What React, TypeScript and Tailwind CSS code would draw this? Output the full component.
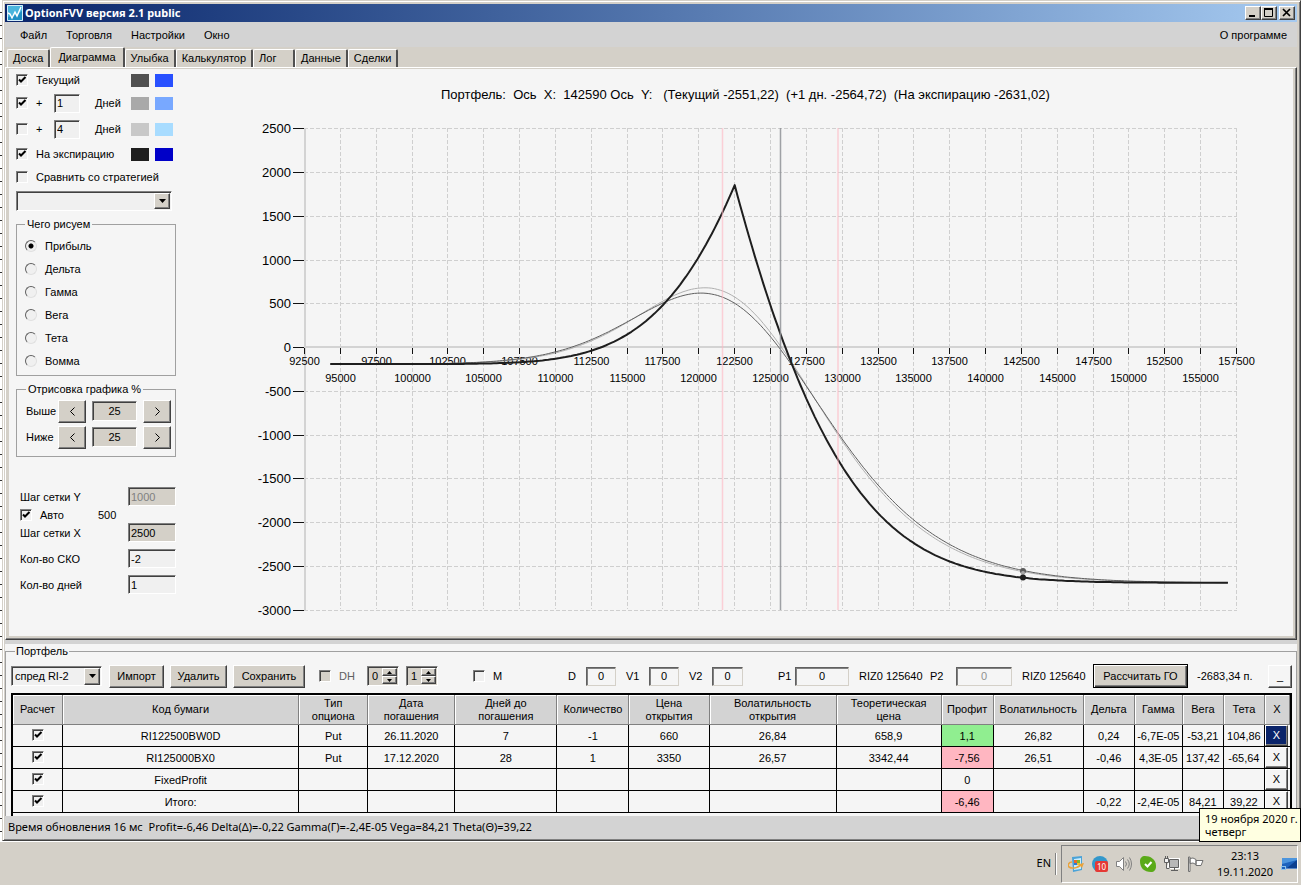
import { useState } from "react";
import type { ReactNode } from "react";

const SUNKEN =
  "border border-t-[#808080] border-l-[#808080] border-b-white border-r-white shadow-[inset_1px_1px_#404040]";
const RAISED =
  "border border-t-white border-l-white border-b-[#404040] border-r-[#404040] shadow-[inset_-1px_-1px_#808080]";
const TAHOMA = "font-['Noto_Sans',sans-serif]";

const TABS = ["Доска", "Диаграмма", "Улыбка", "Калькулятор", "Лог", "Данные", "Сделки"];
const GREEKS = ["Прибыль", "Дельта", "Гамма", "Вега", "Тета", "Вомма"];

const COLUMNS = [
  { title: "Расчет", width: "w-[50px]" },
  { title: "Код бумаги", width: "w-[236px]" },
  { title: "Тип\nопциона", width: "w-[69px]" },
  { title: "Дата\nпогашения", width: "w-[87px]" },
  { title: "Дней до\nпогашения", width: "w-[102px]" },
  { title: "Количество", width: "w-[72px]" },
  { title: "Цена\nоткрытия", width: "w-[80px]" },
  { title: "Волатильность\nоткрытия", width: "w-[127px]" },
  { title: "Теоретическая\nцена", width: "w-[105px]" },
  { title: "Профит", width: "w-[52px]" },
  { title: "Волатильность", width: "w-[90px]" },
  { title: "Дельта", width: "w-[51px]" },
  { title: "Гамма", width: "w-[48px]" },
  { title: "Вега", width: "w-[41px]" },
  { title: "Тета", width: "w-[41px]" },
  { title: "X", width: "w-[25px]" },
];

const ROWS = [
  ["RI122500BW0D", "Put", "26.11.2020", "7", "-1", "660", "26,84", "658,9", "1,1", "26,82", "0,24", "-6,7E-05", "-53,21", "104,86"],
  ["RI125000BX0", "Put", "17.12.2020", "28", "1", "3350", "26,57", "3342,44", "-7,56", "26,51", "-0,46", "4,3E-05", "137,42", "-65,64"],
  ["FixedProfit", "", "", "", "", "", "", "", "0", "", "", "", "", ""],
  ["Итого:", "", "", "", "", "", "", "", "-6,46", "", "-0,22", "-2,4E-05", "84,21", "39,22"],
];

const PROFIT_COL = 8;

// normal CDF, Abramowitz & Stegun 26.2.17
function cdf(x: number): number {
  if (x < 0) return 1 - cdf(-x);
  const t = 1 / (1 + 0.2316419 * x);
  const poly = t * (0.31938153 + t * (-0.356563782 + t * (1.781477937 + t * (-1.821255978 + t * 1.330274429))));
  return 1 - (Math.exp((-x * x) / 2) / Math.sqrt(2 * Math.PI)) * poly;
}

function putPrice(spot: number, strike: number, days: number, vol: number) {
  if (days === 0) return Math.max(strike - spot, 0);
  const s = vol * Math.sqrt(days / 365);
  const d1 = Math.log(spot / strike) / s + s / 2;
  return strike * cdf(s - d1) - spot * cdf(-d1);
}

// short RI122500BW0D at 660, long RI125000BX0 at 3350
function profit(spot: number, daysPassed: number) {
  return 660 - putPrice(spot, 122500, 7 - daysPassed, 0.2682) + putPrice(spot, 125000, 28 - daysPassed, 0.2651) - 3350;
}

const toX = (value: number) => 304.5 + ((value - 92500) / 65000) * 932;
const toY = (value: number) => 347.5 - value * 0.0875;
const snap = (px: number) => Math.floor(px) + 0.5;

function curve(daysPassed: number) {
  const points: string[] = [];
  for (let spot = 94300; spot <= 156900; spot += 200) {
    points.push(`${toX(spot).toFixed(1)} ${toY(profit(spot, daysPassed)).toFixed(1)}`);
  }
  return "M" + points.join("L");
}

function Chart() {
  const xs = Array.from({ length: 27 }, (_, i) => 92500 + i * 2500);
  const ys = Array.from({ length: 12 }, (_, i) => 2500 - i * 500);
  return (
    <svg viewBox="190 69 1103 567" className="min-w-0 flex-1 font-['Liberation_Sans',Arial,sans-serif]" role="img" aria-label="Диаграмма портфеля">
      <text x="441" y="99" fontSize="13">
        {"Портфель:\u00a0 Ось\u00a0 X:\u00a0 142590 Ось\u00a0 Y:\u00a0\u00a0 (Текущий -2551,22)\u00a0 (+1 дн. -2564,72)\u00a0 (На экспирацию -2631,02)"}
      </text>

      <g stroke="#cfcfcf" strokeDasharray="4 2">
        {xs.slice(1).map((v) => <path key={v} d={`M${snap(toX(v))} 128V609`} />)}
        {ys.map((v) => <path key={v} d={`M304 ${snap(toY(v))}H1237`} />)}
      </g>
      <path d="M305 128V610M304 347H1237" stroke="#d3d3d3" strokeWidth="2" />

      {xs.map((v, i) => (
        <g key={v}>
          <path d={`M${snap(toX(v))} 348v6`} stroke="#111" />
          <text x={snap(toX(v))} y={i % 2 ? 382 : 365} fontSize="11" textAnchor="middle">{v}</text>
        </g>
      ))}
      {ys.map((v) => (
        <g key={v}>
          <path d={`M293 ${snap(toY(v))}h11`} stroke="#111" />
          <text x="291" y={snap(toY(v)) + 4.5} fontSize="13" textAnchor="end">{v}</text>
        </g>
      ))}

      <g fill="none" strokeLinejoin="round">
        <path d={curve(1)} stroke="#b0b0b0" />
        <path d={curve(0)} stroke="#606060" />
        <path d={curve(7)} stroke="#1e1e1e" strokeWidth="2" />
      </g>
      <path d="M722.5 128V610M838 128V610" stroke="#ffb6c1" strokeOpacity="0.6" strokeWidth="1.5" />
      <path d="M780.5 128V610" stroke="#8f9296" strokeOpacity="0.85" strokeWidth="1.5" />
      <circle cx="1023" cy="571" r="3" fill="#5a5a5a" />
      <circle cx="1023" cy="573" r="2" fill="#a9a9a9" />
      <circle cx="1023" cy="577.5" r="3" fill="#1e1e1e" />
    </svg>
  );
}

function Check({ label, checked = false, disabled = false }: { label: string; checked?: boolean; disabled?: boolean }) {
  return (
    <span className="inline-grid size-3 shrink-0">
      <input
        type="checkbox"
        aria-label={label}
        defaultChecked={checked}
        disabled={disabled}
        className={`peer col-start-1 row-start-1 size-3 appearance-none bg-[#f0f0f0] disabled:bg-[#d4d0c8] ${SUNKEN}`}
      />
      <svg viewBox="0 0 12 12" className="pointer-events-none z-10 col-start-1 row-start-1 hidden size-3 peer-checked:block">
        <path d="M3 5.5 5 7.5 9.5 3" stroke="#000" strokeWidth="2" fill="none" />
      </svg>
    </span>
  );
}

function Swatch({ className }: { className: string }) {
  return <span className={`h-[13px] w-[18px] ${className}`} />;
}

function LineRow({ className, label, days, checked, children }: { className: string; label: string; days?: string; checked?: boolean; children: ReactNode }) {
  return (
    <div className={`flex items-center ${className}`}>
      <Check label={label} checked={checked} />
      {days ? (
        <>
          <span className="ml-2 w-[18px]">+</span>
          <input aria-label="Число дней" defaultValue={days} className={`h-[19px] w-[26px] bg-[#f0f0f0] pl-[2px] ${SUNKEN}`} />
          <span className="ml-[15px]">Дней</span>
        </>
      ) : (
        <span className="ml-2">{label}</span>
      )}
      <span className="mr-[3px] ml-auto flex gap-[6px]">{children}</span>
    </div>
  );
}

function Combo({ className, label, options }: { className: string; label: string; options: string[] }) {
  return (
    <div className={`grid shrink-0 bg-[#f0f0f0] p-px ${SUNKEN} ${className}`}>
      <select aria-label={label} className="col-start-1 row-start-1 w-full appearance-none bg-transparent pl-[2px]">
        {options.map((o) => <option key={o}>{o}</option>)}
      </select>
      <span className={`pointer-events-none col-start-1 row-start-1 grid w-4 place-items-center justify-self-end bg-[#d4d0c8] ${RAISED}`}>
        <svg width="7" height="4"><path d="M0 0h7L3.5 4z" /></svg>
      </span>
    </div>
  );
}

function Arrow({ d }: { d: string }) {
  return (
    <svg width="5" height="9" viewBox="0 0 5 9" fill="none" stroke="#000" className="mx-auto">
      <path d={d} />
    </svg>
  );
}

function Percent({ label }: { label: string }) {
  const [value, setValue] = useState(25);
  return (
    <div className="flex h-6 items-center">
      <span className="w-8">{label}</span>
      <button aria-label={`${label} меньше`} onClick={() => setValue(value - 5)} className={`h-[23px] w-7 bg-[#d4d0c8] ${RAISED}`}>
        <Arrow d="M4.500 .5l-4 4 4 4" />
      </button>
      <input aria-label={label} readOnly value={value} className={`mx-[6px] h-5 w-[45px] bg-[#d4d0c8] text-center ${SUNKEN}`} />
      <button aria-label={`${label} больше`} onClick={() => setValue(value + 5)} className={`h-[23px] w-7 bg-[#d4d0c8] ${RAISED}`}>
        <Arrow d="M.5 .5l4 4-4 4" />
      </button>
    </div>
  );
}

function GridField({ label, value, className, disabled }: { label: string; value: string; className: string; disabled?: boolean }) {
  return (
    <label className="flex h-[19px] items-center justify-between">
      {label}
      <input defaultValue={value} disabled={disabled} className={`h-[19px] w-12 pl-[2px] disabled:text-[#808080] ${SUNKEN} ${className}`} />
    </label>
  );
}

function Settings() {
  return (
    <aside className="w-[167px] shrink-0 pl-[7px] leading-3">
      <LineRow className="h-[22px]" label="Текущий" checked>
        <Swatch className="bg-[#505050]" />
        <Swatch className="bg-[#2850ff]" />
      </LineRow>
      <LineRow className="h-6" label="+1 день" days="1" checked>
        <Swatch className="bg-[#a9a9a9]" />
        <Swatch className="bg-[#78a8ff]" />
      </LineRow>
      <LineRow className="h-7" label="+4 дня" days="4">
        <Swatch className="bg-[#c8c8c8]" />
        <Swatch className="bg-[#a8dcff]" />
      </LineRow>
      <LineRow className="h-[22px]" label="На экспирацию" checked>
        <Swatch className="bg-[#1e1e1e]" />
        <Swatch className="bg-[#0000c8]" />
      </LineRow>
      <LineRow className="h-6" label="Сравнить со стратегией">{null}</LineRow>
      <Combo className="mt-[2px] h-5 w-[156px]" label="Стратегия" options={[""]} />

      <fieldset className="mt-[7px] border border-[#a0a0a0] px-2 pt-1 pb-[3px]">
        <legend className="px-[2px]">Чего рисуем</legend>
        {GREEKS.map((name, i) => (
          <label key={name} className="flex h-[23px] items-center">
            <input
              type="radio"
              name="greek"
              defaultChecked={i === 0}
              className="size-3 appearance-none rounded-full border border-t-[#606060] border-l-[#606060] border-r-[#e0e0e0] border-b-[#e0e0e0] bg-[#f0f0f0] checked:bg-[radial-gradient(#000_2px,#f0f0f0_3px)]"
            />
            <span className="ml-2">{name}</span>
          </label>
        ))}
      </fieldset>

      <fieldset className="mt-[7px] border border-[#a0a0a0] pt-1 pr-1 pb-[7px] pl-[9px]">
        <legend className="px-[2px]">Отрисовка графика %</legend>
        <div className="flex flex-col gap-[2px]">
          <Percent label="Выше" />
          <Percent label="Ниже" />
        </div>
      </fieldset>

      <div className="mt-[30px] pb-6 pl-1">
        <GridField label="Шаг сетки Y" value="1000" className="bg-[#d4d0c8]" disabled />
        <div className="flex h-[17px] items-center">
          <Check label="Авто" checked />
          <span className="ml-2 w-[58px]">Авто</span>
          <span>500</span>
        </div>
        <div className="flex flex-col gap-[7px]">
          <GridField label="Шаг сетки X" value="2500" className="bg-[#d4d0c8]" />
          <GridField label="Кол-во СКО" value="-2" className="bg-[#f0f0f0]" />
          <GridField label="Кол-во дней" value="1" className="bg-[#f0f0f0]" />
        </div>
      </div>
    </aside>
  );
}

function Spinner({ label, start }: { label: string; start: number }) {
  const [value, setValue] = useState(start);
  return (
    <span className={`flex h-5 w-8 bg-[#d4d0c8] p-px ${SUNKEN}`}>
      <input aria-label={label} readOnly value={value} className="w-[13px] bg-transparent pl-[3px]" />
      <span className="flex flex-1 flex-col">
        <button aria-label={`${label} больше`} onClick={() => setValue(value + 1)} className={`grid flex-1 place-items-center ${RAISED}`}>
          <svg width="5" height="3"><path d="M0 3h5L2.5 0z" /></svg>
        </button>
        <button aria-label={`${label} меньше`} onClick={() => setValue(value - 1)} className={`grid flex-1 place-items-center ${RAISED}`}>
          <svg width="5" height="3"><path d="M0 0h5L2.5 3z" /></svg>
        </button>
      </span>
    </span>
  );
}

function Num({ label, className, disabled }: { label: string; className: string; disabled?: boolean }) {
  return (
    <label className="flex items-center justify-between">
      {label}
      <input defaultValue="0" disabled={disabled} className={`h-[19px] border border-t-[#606060] border-l-[#606060] border-r-[#d4d0c8] border-b-[#d4d0c8] bg-[#f5f5f5] text-center shadow-[inset_1px_1px_#808080] disabled:text-[#909090] ${className}`} />
    </label>
  );
}

function Toolbar() {
  return (
    <div className="mt-[7px] flex h-6 items-center whitespace-nowrap">
      <Combo className="h-5 w-[91px]" label="Портфель" options={["спред RI-2"]} />
      <div className="ml-[7px] flex gap-[6px]">
        <button className={`h-[23px] w-[55px] bg-[#d4d0c8] ${RAISED}`}>Импорт</button>
        <button className={`h-[23px] w-[57px] bg-[#d4d0c8] ${RAISED}`}>Удалить</button>
        <button className={`h-[23px] w-[72px] bg-[#d4d0c8] ${RAISED}`}>Сохранить</button>
      </div>
      <div className="ml-[14px] flex w-12 items-center gap-2 text-[#606060]">
        <Check label="DH" disabled />DH
      </div>
      <div className="flex gap-[7px]">
        <Spinner label="DH от" start={0} />
        <Spinner label="DH до" start={1} />
      </div>
      <div className="ml-[35px] flex w-[95px] items-center gap-2"><Check label="M" />M</div>
      <div className="flex gap-[10px]">
        <div className="w-12"><Num label="D" className="w-[30px]" /></div>
        <div className="w-[53px]"><Num label="V1" className="w-[30px]" /></div>
        <div className="w-[54px]"><Num label="V2" className="w-[31px]" /></div>
      </div>
      <div className="ml-[35px] w-[71px]"><Num label="P1" className="w-[54px]" /></div>
      <span className="ml-[10px] w-[71px]">RIZ0 125640</span>
      <div className="w-[82px]"><Num label="P2" className="w-14" disabled /></div>
      <span className="ml-[10px] w-[71px]">RIZ0 125640</span>
      <button className="h-6 w-[95px] border border-black bg-[#d4d0c8] shadow-[inset_1px_1px_#fff,inset_-1px_-1px_#404040,inset_-2px_-2px_#808080]">Рассчитать ГО</button>
      <span className="ml-[9px]">-2683,34 п.</span>
      <button aria-label="Свернуть портфель" className={`ml-auto h-[23px] w-6 ${RAISED}`}>_</button>
    </div>
  );
}

function PortfolioTable() {
  return (
    <div className="mt-[5px] border-2 border-b-0 border-black pb-[3px]">
      <table className="w-full table-fixed border-separate border-spacing-0 text-center">
        <colgroup>
          {COLUMNS.map((c) => <col key={c.title} className={c.width} />)}
        </colgroup>
        <thead>
          <tr className="h-[30px] bg-[#d3d3d3]">
            {COLUMNS.map((c) => (
              <th key={c.title} className="border-r border-b border-[#808080] p-0 leading-[13px] font-normal whitespace-pre-line shadow-[inset_1px_1px_#fff]">{c.title}</th>
            ))}
          </tr>
        </thead>
        <tbody>
          {ROWS.map((row, r) => (
            <tr key={row[0]} className="h-[22px]">
              <td className="border-r border-b border-black p-0 leading-3"><Check label={row[0]} checked /></td>
              {row.map((cell, c) => {
                const tint = c !== PROFIT_COL || cell === "0" ? "" : cell.startsWith("-") ? "bg-[#ffb6c1]" : "bg-[#90ee90]";
                return <td key={c} className={`border-r border-b border-black p-0 leading-3 whitespace-nowrap ${tint}`}>{cell}</td>;
              })}
              <td className="border-b border-black p-0">
                <button className={`block h-[21px] w-[23px] ${RAISED} ${r === 0 ? "bg-[#0a246a] text-white" : "bg-[#f5f5f5]"}`}>X</button>
              </td>
            </tr>
          ))}
        </tbody>
      </table>
    </div>
  );
}

function TitleButton({ label, children }: { label: string; children: ReactNode }) {
  return (
    <button aria-label={label} className={`h-[14px] w-4 bg-[#d4d0c8] ${RAISED}`}>
      <svg viewBox="0 0 14 12" className="h-3 w-[14px]" fill="none" stroke="#000">{children}</svg>
    </button>
  );
}

function TitleBar() {
  return (
    <div className={`flex h-[18px] items-center bg-linear-to-r from-[#0a246a] to-[#a6caf0] pr-[2px] pl-[2px] text-white ${TAHOMA}`}>
      <svg width="16" height="16" viewBox="0 0 16 16">
        <rect width="16" height="16" fill="#1f8fc4" />
        <path d="M0 0h16v5L10 10 0 12z" fill="#49b5dd" />
        <path d="M1 8l2 1 2 4 3-6 2 4 4-9" fill="none" stroke="#fff" strokeWidth="1.4" />
        <path d="M.5.5h15v15H.5z" fill="none" stroke="#d5eefa" />
      </svg>
      <span className="ml-[2px] font-bold">OptionFVV версия 2.1 public</span>
      <div className="ml-auto flex">
        <TitleButton label="Свернуть"><path d="M3 9h6" strokeWidth="2" /></TitleButton>
        <TitleButton label="Развернуть"><path d="M2.5 2v7.5h8V2M2 2h9" /><path d="M2 2h9" strokeWidth="2" /></TitleButton>
        <span className="w-[2px]" />
        <TitleButton label="Закрыть"><path d="M3 2l7 7M10 2l-7 7" strokeWidth="1.7" /></TitleButton>
      </div>
    </div>
  );
}

function Tray() {
  return (
    <div className="flex shrink-0 items-center gap-2">
      <svg width="16" height="16" viewBox="0 0 16 16">
        <path d="M4 1l10-1v14l-9 2z" fill="#4ba3d8" />
        <path d="M6 3l7-1v11l-7 1z" fill="#c9ecfb" />
        <path d="M6 4h3v3H6z" fill="#e86a2c" /><path d="M9 4h3v3H9z" fill="#7cb82f" />
        <path d="M6 7h3v2H6z" fill="#2f78d0" /><path d="M9 7h3v2H9z" fill="#f2c12e" />
        <path d="M4 6C1 6-1 9 1 11c3 2 8 1 12-2" fill="none" stroke="#e9a33c" strokeWidth="1.6" />
        <path d="M11 8l5-1-2 5z" fill="#e9a33c" />
      </svg>
      <svg width="16" height="16" viewBox="0 0 16 16">
        <circle cx="8" cy="8" r="8" fill="#3498cb" />
        <rect x="3" y="5" width="13" height="11" rx="2" fill="#e53935" />
        <text x="9.5" y="14" fontSize="8" fill="#fff" textAnchor="middle">10</text>
      </svg>
      <svg width="16" height="16" viewBox="0 0 16 16" fill="none" stroke="#808080">
        <path d="M.5 5.5h3l4-4v13l-4-4h-3z" fill="#fff" />
        <path d="M9.5 5.5q2 2.500 0 5M11.500 3.500q3.500 4.500 0 9M13.500 1.500q4 6.500 0 13" />
      </svg>
      <svg width="16" height="16" viewBox="0 0 16 16">
        <path d="M5 0c5 0 11 3 11 10 0 4-2 6-5 6C4 16 0 12 0 5c0-3 2-5 5-5z" fill="#5aaa18" />
        <path d="M5 8l2.500 2.500L11.500 6" fill="none" stroke="#fff" strokeWidth="2" />
      </svg>
      <svg width="16" height="16" viewBox="0 0 16 16" fill="none" stroke="#606060">
        <path d="M5.500 3.500h9v8h-9z" fill="#b8b8b8" stroke="#fff" strokeWidth="3" />
        <path d="M5.500 3.500h9v8h-9z" fill="#b8b8b8" />
        <path d="M7 14.500h7M10.500 12v2" />
        <path d="M.5 2.500h4v4h-4zM1.500 0v2M3.500 0v2M2.500 7v5.500h3" fill="#f5f5f5" />
      </svg>
      <svg width="16" height="16" viewBox="0 0 16 16" fill="#fff" stroke="#707070">
        <path d="M.5 1h1.500v14.500H.5zM2 2.500q3-1.500 6 1v5q-3-2.500-6-1zM8 4.500h7l-2 5H8z" />
      </svg>
    </div>
  );
}

function Taskbar() {
  return (
    <footer className={`relative flex h-11 items-center justify-end border-t border-white bg-[#d4d0c8] pr-[3px] ${TAHOMA}`}>
      <span>EN</span>
      <span className="ml-1 h-[22px] w-[2px] border-r border-r-white bg-[#808080]" />
      <div className="ml-1 flex h-[38px] w-[237px] items-center border border-t-[#808080] border-l-[#808080] border-r-white border-b-white pl-[6px]">
        <Tray />
        <div className="ml-auto w-16 text-center leading-4">
          <div>23:13</div>
          <div>19.11.2020</div>
        </div>
        <svg className="ml-1 shrink-0" width="16" height="16" viewBox="0 0 16 16">
          <path d="M1 2h15v10H1z" fill="#1d62bd" />
          <path d="M16 4v8H6z" fill="#0c3f8f" />
          <path d="M1 2h15v2L1 8z" fill="#4d95dd" />
          <path d="M0 10h5v4H0z" fill="#8ec2ea" />
          <path d="M1 11h3v2H1z" fill="#1d62bd" />
          <path d="M5 12h11v1H5z" fill="#5b89c9" />
        </svg>
      </div>
      <div role="tooltip" className="absolute right-0 bottom-full z-10 w-[102px] border border-black bg-[#ffffe1] px-[5px] py-[3px] leading-[13px] whitespace-nowrap">
        19 ноября 2020 г.<br />четверг
      </div>
    </footer>
  );
}

export default function App() {
  const [tab, setTab] = useState("Диаграмма");
  return (
    <div className="flex min-h-screen flex-col bg-[#d4d0c8] font-['Liberation_Sans',Arial,sans-serif] text-[11px] text-black">
      <div className="flex flex-1">
        <div className="w-[2px] bg-[repeating-linear-gradient(#fff_0_12px,#333_12px_13px)]" />
        <div className="flex min-w-0 flex-1 flex-col border border-t-[#d4d0c8] border-r-[#404040] border-b-[#404040] border-l-[#d4d0c8] pt-[3px] pr-[3px] pb-px pl-[2px] shadow-[inset_1px_1px_#fff,inset_-1px_-1px_#808080]">
          <TitleBar />
          <nav className="flex h-[25px] items-center bg-[#d3d3d3] pt-px pr-[10px] pl-[15px]">
            <button className="mr-[19px]">Файл</button>
            <button className="mr-[19px]">Торговля</button>
            <button className="mr-[19px]">Настройки</button>
            <button>Окно</button>
            <button className="ml-auto">О программе</button>
          </nav>
          <div role="tablist" className="flex items-end pl-[2px]">
            {TABS.map((name) => (
              <button
                key={name}
                role="tab"
                aria-selected={name === tab}
                onClick={() => setTab(name)}
                className={`min-w-[42px] rounded-t-xs border-t border-r-2 border-l border-t-white border-r-[#505050] border-l-white bg-[#d4d0c8] text-left ${name === tab ? "h-5 px-[7px]" : "h-[18px] px-[5px]"}`}
              >
                {name}
              </button>
            ))}
          </div>
          <div className="flex flex-1 border border-t-white border-r-[#404040] border-b-[#404040] border-l-white bg-[#d4d0c8] pt-px pr-[3px] pb-[3px] pl-[3px] shadow-[inset_-1px_-1px_#808080]">
            <div className="flex min-w-0 flex-1 gap-[14px] bg-[#f5f5f5]">
              <Settings />
              <Chart />
            </div>
          </div>
          <div className="h-1 bg-[#d3d3d3]" />
          <div className="bg-[#f5f5f5] pt-px">
            <fieldset className="min-w-0 border border-b-0 border-[#a0a0a0] pr-1 pl-[5px]">
              <legend className="ml-1 px-px leading-3">Портфель</legend>
              <Toolbar />
              <PortfolioTable />
            </fieldset>
          </div>
          <div className={`flex h-[23px] items-center bg-[#d3d3d3] pl-[3px] whitespace-pre ${TAHOMA}`}>
            {"Время обновления 16 мс  Profit=-6,46 Delta(Δ)=-0,22 Gamma(Γ)=-2,4E-05 Vega=84,21 Theta(Θ)=39,22"}
          </div>
        </div>
      </div>
      <Taskbar />
    </div>
  );
}
